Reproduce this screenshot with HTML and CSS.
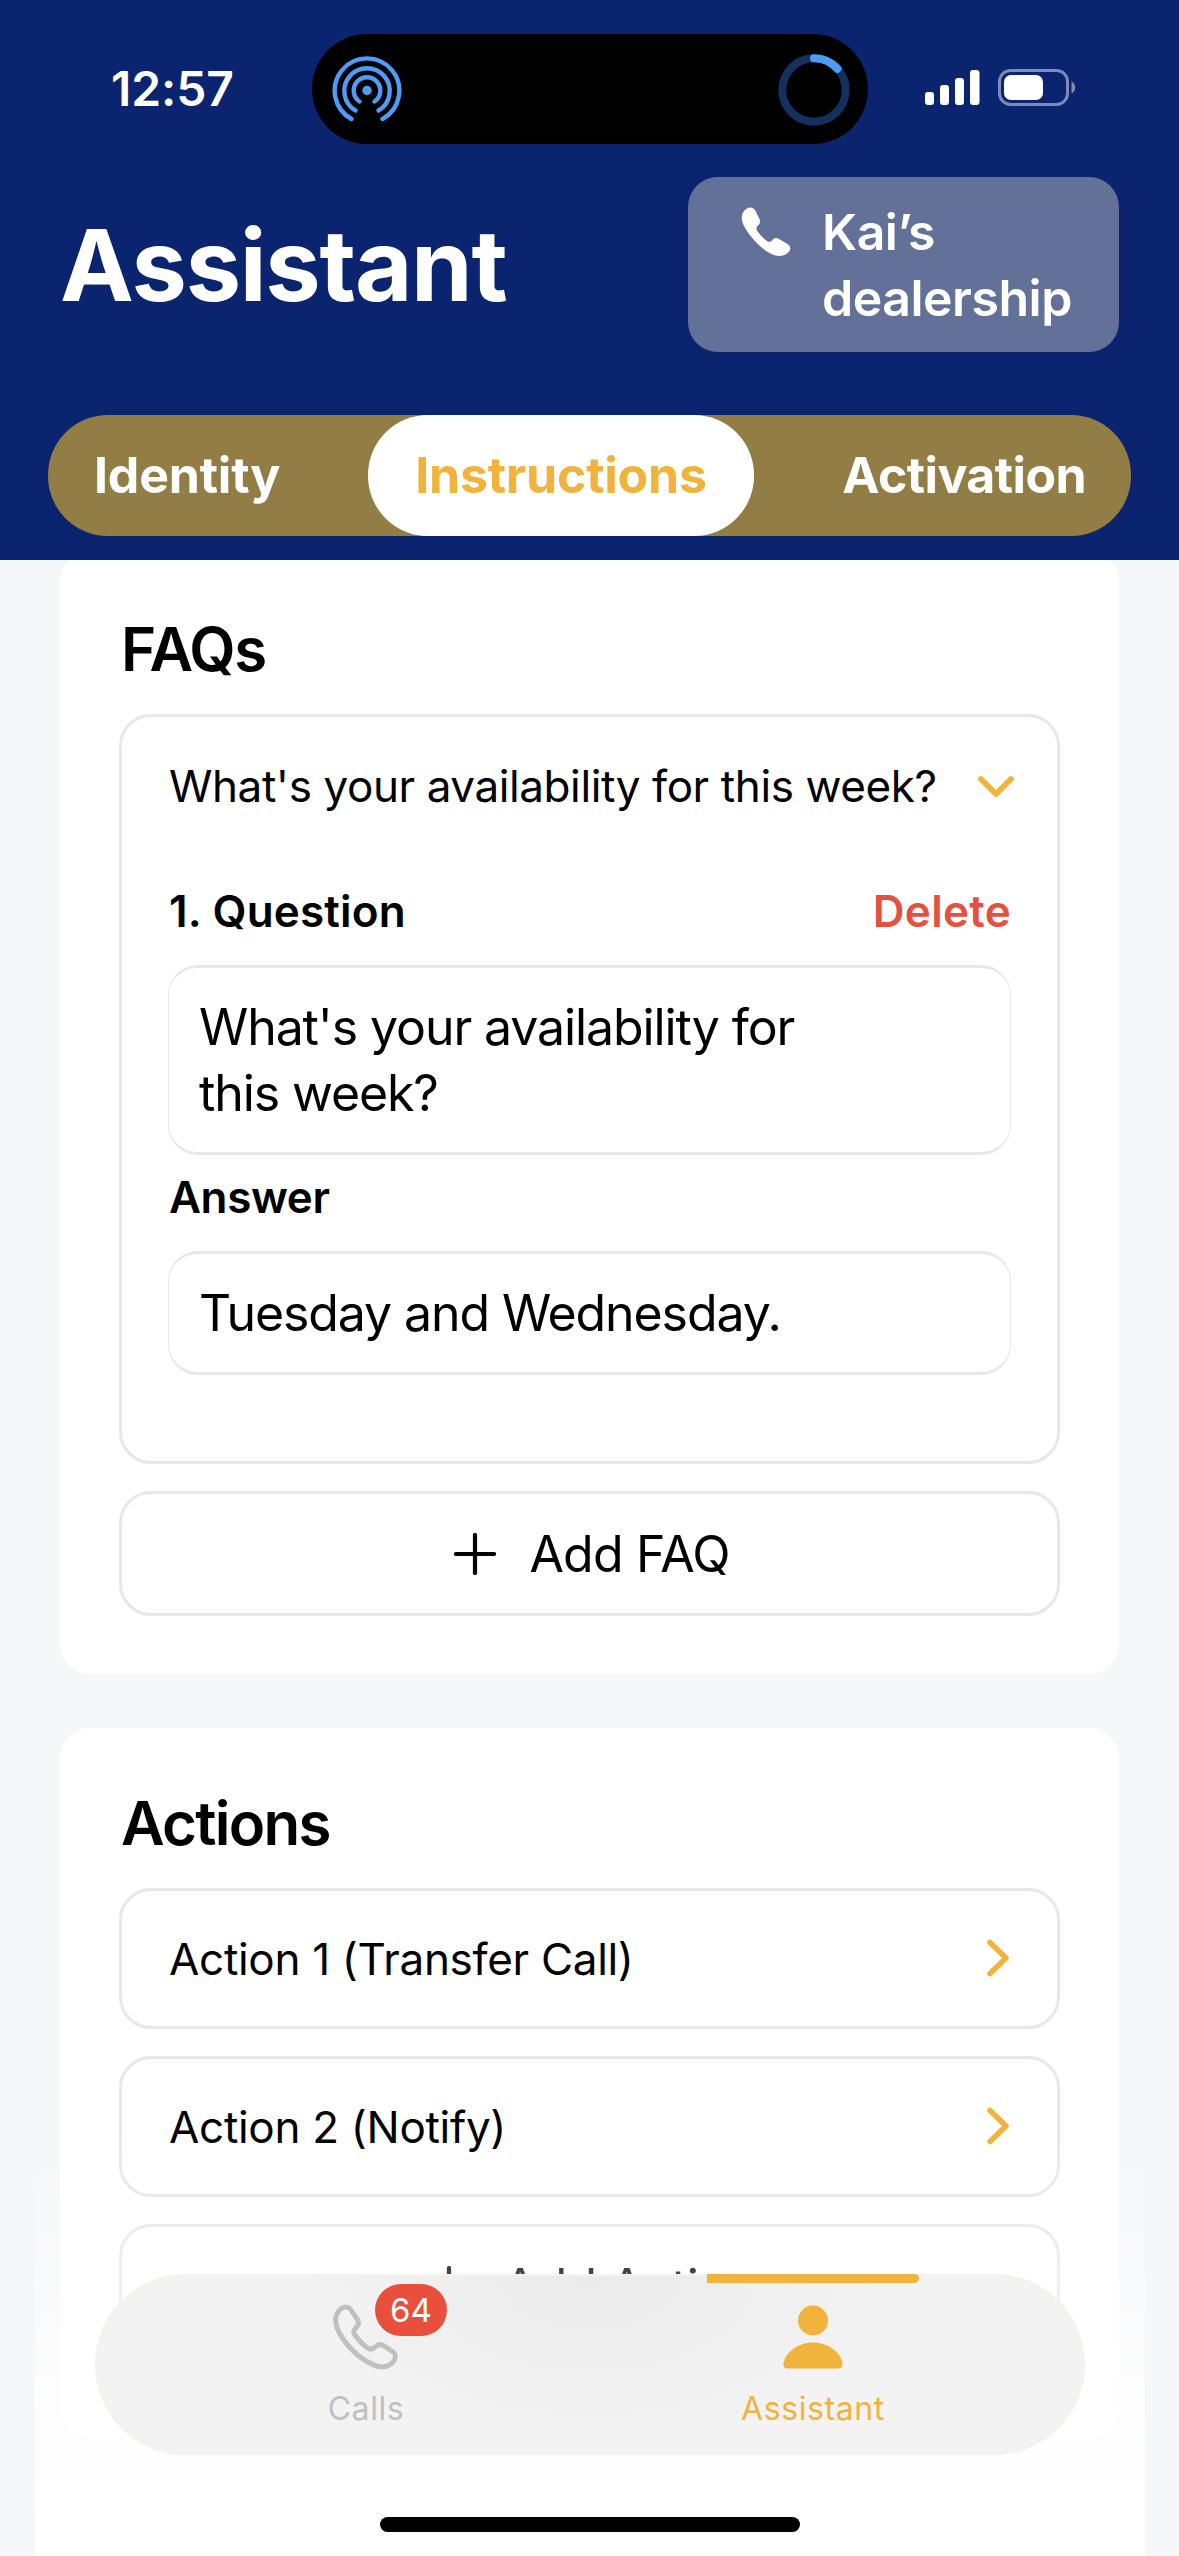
FILE: index.html
```html
<!DOCTYPE html>
<html lang="en">
<head>
<meta charset="utf-8">
<title>Assistant</title>
<link rel="stylesheet" href="styles.css">
</head>
<body>
<div class="screen">
  <header class="header">
    <div class="status">
      <div class="time">12:57</div>
      <div class="island">
        <svg class="airdrop" width="72" height="72" viewBox="0 0 72 72" fill="none" stroke="#4d9df8" stroke-width="4.4" stroke-linecap="round">
          <circle cx="36" cy="36.500" r="4.700" fill="#4d9df8" stroke="none"/>
          <path d="M28.500 47.500A13.300 13.300 0 1 1 43.500 47.500"/>
          <path d="M24.500 56.500A22.700 22.700 0 1 1 47.500 56.500"/>
          <path d="M20.500 65A32.300 32.300 0 1 1 51.500 65"/>
        </svg>
        <svg class="ring" width="72" height="72" viewBox="0 0 72 72" fill="none" stroke-width="8">
          <circle cx="36" cy="36" r="31.700" stroke="#14305f"/>
          <path d="M36 4.300A31.700 31.700 0 0 1 59.500 14.800" stroke="#4d9df8" stroke-linecap="round"/>
        </svg>
      </div>
      <svg class="indicators" width="152" height="38" viewBox="0 0 152 38" fill="#fff">
        <rect x="1" y="23" width="9" height="13" rx="3"/>
        <rect x="16" y="16" width="9" height="20" rx="3"/>
        <rect x="31" y="9" width="9" height="27" rx="3"/>
        <rect x="46" y="1" width="9.500" height="35" rx="3"/>
        <rect x="75.500" y="1.500" width="68" height="34" rx="11" fill="none" stroke="#7c8bba" stroke-width="3"/>
        <rect x="80" y="6" width="39" height="25" rx="7"/>
        <path d="M147.500 12.500c5 2 5 10 0 12z" fill="#7c8bba"/>
      </svg>
    </div>
    <div class="heading">
      <h1 class="title">Assistant</h1>
      <div class="dealer">
        <svg class="dealer-icon" width="50" height="50" viewBox="0 0 50 50" fill="#fff"><path d="M5 2C8.500 -.5 12 0 14 3L18.500 12C19.500 14.500 19 17 17 18.500C15 20 15 22 16.500 24.500C19.500 28.500 22.500 31.500 26 34C28 35.500 30 35 31.500 33C33.500 30.500 35.500 30.500 38 32L46.500 37C49.500 39 50 41.500 48.500 44C44 50 36 50.500 28.500 46C18.500 40 7.500 28.500 2 17C-.5 10 1 5 5 2Z"/></svg>
        <span class="dealer-name">Kai’s<br>dealership</span>
      </div>
    </div>
    <nav class="tabs">
      <span class="tab tab-left">Identity</span>
      <span class="tab tab-active">Instructions</span>
      <span class="tab tab-right">Activation</span>
    </nav>
  </header>
  <main class="content">
    <section class="card card-faqs">
      <h2 class="section-title title-faqs">FAQs</h2>
      <div class="faq">
        <div class="faq-summary"><span class="label summary-label">What's your availability for this week?</span>
          <svg width="38" height="24" viewBox="0 0 38 24" fill="none" stroke="#f1b33c" stroke-width="5.800" stroke-linecap="round" stroke-linejoin="round"><path d="M4 5L19 20 34 5"/></svg>
        </div>
        <div class="field-head"><span class="field-title">1. Question</span><span class="delete">Delete</span></div>
        <div class="field field-question">What's your availability for<br>this week?</div>
        <div class="field-title answer-title">Answer</div>
        <div class="field field-answer">Tuesday and Wednesday.</div>
      </div>
      <div class="add">
        <svg width="42" height="42" viewBox="0 0 42 42" stroke="#000" stroke-width="4.200" stroke-linecap="round"><path d="M21 2v38M2 21h38"/></svg>
        <span>Add FAQ</span>
      </div>
    </section>
    <section class="card card-actions">
      <h2 class="section-title">Actions</h2>
      <div class="action"><span class="label">Action 1 (Transfer Call)</span>
        <svg width="24" height="40" viewBox="0 0 24 40" fill="none" stroke="#f1b33c" stroke-width="5.500" stroke-linecap="round" stroke-linejoin="round"><path d="M4 3.500L20 19 4 34.500"/></svg></div>
      <div class="action"><span class="label">Action 2 (Notify)</span>
        <svg width="24" height="40" viewBox="0 0 24 40" fill="none" stroke="#f1b33c" stroke-width="5.500" stroke-linecap="round" stroke-linejoin="round"><path d="M4 3.500L20 19 4 34.500"/></svg></div>
      <div class="add">
        <svg width="42" height="42" viewBox="0 0 42 42" stroke="#000" stroke-width="4.200" stroke-linecap="round"><path d="M21 2v38M2 21h38"/></svg>
        <span>Add Action</span>
      </div>
    </section>
  </main>
  <footer class="dock">
    <div class="tabbar">
      <div class="item item-calls">
        <svg width="66" height="66" viewBox="0 0 66 66" fill="none" stroke="#bfc0c1" stroke-width="5" stroke-linejoin="round"><path d="M7 5.500C11 2 15.500 2.500 18 6L24.500 15.500C26 18.500 25.500 21.500 23 23.500C20.500 26 20 28 22 31C25.500 36 29.500 40.500 34.500 44C37.500 46 39.500 45.500 42 43C44.500 40.500 47.500 40 50.500 41.500L59.500 47.500C63 50 63.500 54 60 58C54 64.500 45 64 35 58C22.500 51 10.500 38.500 4.500 25C1.500 17 2 10.500 7 5.500Z"/></svg>
        <span class="badge">64</span>
        <span class="item-label">Calls</span>
      </div>
      <div class="item item-assistant">
        <svg width="66" height="66" viewBox="0 0 66 66" fill="#f1b33c"><circle cx="33" cy="16.500" r="15"/><path d="M3.500 59.500C5 48.500 18 38.500 33 38.500S61 48.500 62.500 59.500Q63 64.500 58 64.500H8Q3 64.500 3.500 59.500Z"/></svg>
        <span class="item-label">Assistant</span>
      </div>
    </div>
    <div class="home"></div>
  </footer>
</div>
</body>
</html>
```
FILE: styles.css
```css
* { box-sizing: border-box; }
body { margin: 0; font-family: Inter, "Liberation Sans", sans-serif; color: #000; }
h1, h2 { margin: 0; }
svg { display: block; flex: none; }
.screen { position: relative; width: 1179px; height: 2556px; overflow: hidden; background: #f6f7f9; }
.header { position: relative; z-index: 1; height: 560px; background: #0a246f; color: #fff; }
.status { display: grid; grid-template-columns: 312px 556px 311px; height: 177px; padding-top: 34px; }
.time { padding-left: 111px; font-size: 48px; line-height: 109px; font-weight: 600; letter-spacing: -.1px; }
.island { display: flex; justify-content: space-between; align-items: center; height: 110px; padding: 1px 18px 0 19px; border-radius: 55px; background: #000; }
.indicators { margin: 35px 0 0 56px; }
.heading { display: flex; justify-content: space-between; height: 238px; padding: 0 60px; }
.title { font-size: 99px; line-height: 176px; font-weight: 700; letter-spacing: -1.3px; }
.dealer { display: flex; gap: 31px; width: 431px; height: 175px; padding: 22px 0 0 53px; border-radius: 30px; background: #637098; font-size: 50px; line-height: 66px; font-weight: 600; letter-spacing: -.5px; }
.dealer-icon { margin-top: 8px; }
.tabs { display: flex; justify-content: space-between; width: 1083px; height: 121px; margin-left: 48px; border-radius: 60px; background: #927e45; font-size: 50px; line-height: 121px; font-weight: 700; letter-spacing: -.2px; }
.tab-left { width: 320px; padding-left: 46px; }
.tab-active { width: 386px; border-radius: 60px; background: #fff; color: #f1b33c; text-align: center; }
.tab-right { width: 377px; padding-right: 45px; text-align: right; letter-spacing: -.6px; }
.content { display: flex; flex-direction: column; gap: 54px; margin-top: -8px; padding: 0 60px; }
.card { padding: 0 59px; border-radius: 30px; background: #fff; }
.card-faqs { height: 1122px; padding-top: 57px; }
.card-actions { height: 709px; padding-top: 55px; }
.section-title { padding-left: 2px; margin-bottom: 25px; font-size: 60px; line-height: 80px; font-weight: 600; letter-spacing: -1.7px; }
.title-faqs { letter-spacing: -1.4px; }
.faq { height: 750px; padding: 0 46px; border: 3px solid #e8e8e9; border-radius: 32px; }
.faq-summary { display: flex; align-items: center; justify-content: space-between; height: 137px; margin-right: -4px; }
.label { font-size: 44px; letter-spacing: -.3px; white-space: nowrap; }
.summary-label { padding-left: 1px; letter-spacing: -.4px; }
.field-head { display: flex; justify-content: space-between; height: 111px; padding: 27px 0 0 1px; font-size: 44px; line-height: 60px; }
.field-title { font-size: 44px; font-weight: 600; letter-spacing: .2px; }
.delete { color: #e4513f; font-weight: 600; letter-spacing: .3px; }
.field { padding: 26px 30px; border: solid #e8e8e9; border-width: 3px 1px; border-radius: 30px; font-size: 50px; line-height: 66px; letter-spacing: -1.1px; }
.field-question { height: 190px; }
.answer-title { height: 96px; padding: 12px 0 0 1px; line-height: 60px; letter-spacing: -.4px; }
.field-answer { height: 124px; }
.add { display: flex; justify-content: center; align-items: center; gap: 33px; height: 125px; margin-top: 27px; padding-left: 5px; border: 3px solid #e8e8e9; border-radius: 32px; font-size: 50px; letter-spacing: -.8px; }
.action { display: flex; align-items: center; justify-content: space-between; height: 141px; margin-bottom: 27px; padding: 0 47px; border: 3px solid #e8e8e9; border-radius: 32px; }
.dock { position: absolute; z-index: 2; left: 35px; bottom: 0; width: 1110px; height: 426px; padding: 144px 60px 0; background: linear-gradient(rgba(255,255,255,0), rgba(255,255,255,.26) 33%, rgba(255,255,255,.78) 62%, #fff 90%); }
.tabbar { display: grid; grid-template-columns: 542px 212px; height: 181px; border-radius: 91px; border: 2px solid #f6f1e9; background: radial-gradient(ellipse 300px 170px at 50% 0, #ebebeb, #f3f3f4); }
.item { position: relative; display: flex; flex-direction: column; align-items: center; padding-top: 28px; }
.item-calls { padding-right: 4px; }
.item-assistant { margin-left: 68px; width: 212px; }
.item-assistant::before { content: ""; position: absolute; left: 0; top: -2px; width: 212px; height: 9px; border-radius: 0 5px 5px 0; background: #f1b33c; }
.badge { position: absolute; left: 278px; top: 8px; width: 72px; height: 52px; border-radius: 26px; background: #e94f3d; color: #fff; font-size: 33px; line-height: 52px; text-align: center; }
.item-label { margin-top: 19px; font-size: 32px; line-height: 40px; letter-spacing: .6px; color: #bfc0c1; }
.item-assistant .item-label { color: #f1b33c; }
.home { width: 420px; height: 15px; margin: 62px 0 0 285px; border-radius: 8px; background: #000; }
```
